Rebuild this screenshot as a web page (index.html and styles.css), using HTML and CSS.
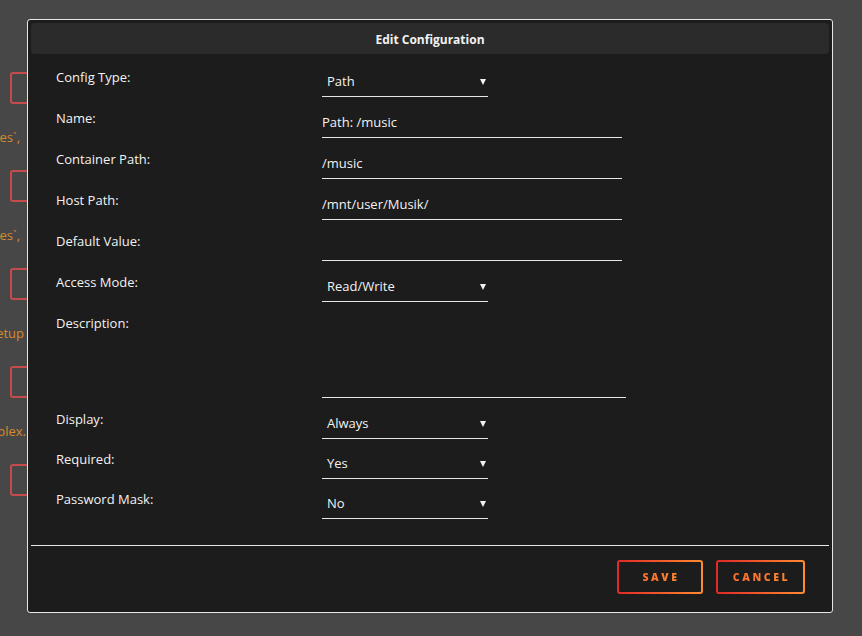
FILE: index.html
```html
<!DOCTYPE html>
<html lang="en">
<head>
  <meta charset="UTF-8">
  <title>Edit Configuration</title>
  <link rel="stylesheet" href="styles.css">
</head>
<body>
  <div id="page">
    <div class="bg-item"><div class="bg-box"></div><div class="bg-text"><span>files`,</span></div></div>
    <div class="bg-item"><div class="bg-box"></div><div class="bg-text"><span>values`,</span></div></div>
    <div class="bg-item"><div class="bg-box"></div><div class="bg-text wide"><span>setup</span></div></div>
    <div class="bg-item"><div class="bg-box"></div><div class="bg-text wider"><span>plex.</span></div></div>
    <div class="bg-item"><div class="bg-box"></div></div>
  </div>

  <div id="dialog">
    <div class="dialog-title">Edit Configuration</div>
    <form class="config-form">
      <div class="row">
        <label>Config Type:</label>
        <div class="select"><span>Path</span><i class="arrow"></i></div>
      </div>
      <div class="row">
        <label>Name:</label>
        <div class="input">Path: /music</div>
      </div>
      <div class="row">
        <label>Container Path:</label>
        <div class="input">/music</div>
      </div>
      <div class="row">
        <label>Host Path:</label>
        <div class="input">/mnt/user/Musik/</div>
      </div>
      <div class="row">
        <label>Default Value:</label>
        <div class="input"></div>
      </div>
      <div class="row">
        <label>Access Mode:</label>
        <div class="select"><span>Read/Write</span><i class="arrow"></i></div>
      </div>
      <div class="row">
        <label>Description:</label>
        <div class="textarea"></div>
      </div>
      <div class="row tight">
        <label>Display:</label>
        <div class="select"><span>Always</span><i class="arrow"></i></div>
      </div>
      <div class="row tight">
        <label>Required:</label>
        <div class="select"><span>Yes</span><i class="arrow"></i></div>
      </div>
      <div class="row tight">
        <label>Password Mask:</label>
        <div class="select"><span>No</span><i class="arrow"></i></div>
      </div>
    </form>
    <div class="divider"></div>
    <div class="actions">
      <button class="btn save"><span>SAVE</span></button>
      <button class="btn cancel"><span>CANCEL</span></button>
    </div>
  </div>
</body>
</html>
```

FILE: styles.css
```css
body {
  margin: 0;
  width: 862px;
  height: 636px;
  background: #474747;
  font-family: "Open Sans", "Noto Sans", sans-serif;
  font-size: 13px;
  color: #f2f2f2;
  overflow: hidden;
  position: relative;
}
#page {
  padding-top: 72px;
  padding-left: 10px;
}
.bg-item {
  height: 98px;
}
.bg-box {
  width: 60px;
  height: 28px;
  border: 2px solid #c84b4b;
  border-radius: 3px;
}
.bg-text {
  width: 20px;
  margin-left: -10px;
  margin-top: 24px;
  display: flex;
  justify-content: flex-end;
  white-space: nowrap;
  color: #d88a2a;
  font-size: 13px;
  line-height: 18px;
}
.bg-text.wide {
  width: 24px;
}
.bg-text.wider {
  width: 26px;
}

#dialog {
  position: absolute;
  left: 27px;
  top: 19px;
  width: 804px;
  height: 592px;
  border: 1px solid #e6e6e6;
  border-radius: 3px;
  background: #1c1c1c;
  display: flex;
  flex-direction: column;
}
.dialog-title {
  margin: 3px 3px 0;
  height: 31px;
  line-height: 33px;
  background: #2b2b2b;
  border-radius: 4px;
  text-align: center;
  font-weight: 700;
  font-size: 12px;
}
.config-form {
  padding: 12px 0 0 28px;
  flex: 1;
}
.row {
  display: grid;
  grid-template-columns: 266px auto;
  margin-bottom: 10px;
}
.row.tight {
  margin-bottom: 9px;
}
.row label {
  line-height: 20px;
  padding-top: 1px;
}
.select, .input {
  box-sizing: border-box;
  height: 31px;
  line-height: 30px;
  border-bottom: 1px solid #e6e6e6;
}
.select {
  width: 166px;
  padding: 0 2px 0 5px;
  display: flex;
  align-items: center;
  justify-content: space-between;
}
.arrow {
  width: 0;
  height: 0;
  border-left: 3px solid transparent;
  border-right: 3px solid transparent;
  border-top: 6px solid #f2f2f2;
  margin-top: 1px;
}
.input {
  width: 300px;
}
.textarea {
  box-sizing: border-box;
  width: 304px;
  height: 86px;
  border-bottom: 1px solid #e6e6e6;
}
.divider {
  margin: 0 3px;
  height: 1px;
  background: #e6e6e6;
}
.actions {
  display: flex;
  justify-content: flex-end;
  gap: 13px;
  padding: 14px 27px 18px 0;
}
.btn {
  height: 34px;
  border: 2px solid transparent;
  border-radius: 3px;
  background: linear-gradient(#1c1c1c, #1c1c1c) padding-box,
    linear-gradient(90deg, #e22828, #ff8c2f) border-box;
  font-family: "Open Sans", sans-serif;
  font-weight: 800;
  font-size: 10.5px;
  letter-spacing: 2.6px;
  padding: 0 0 0 2px;
  cursor: pointer;
}
.btn span {
  background: linear-gradient(90deg, #fb6e2c, #ff8530);
  -webkit-background-clip: text;
  background-clip: text;
  color: transparent;
}
.save {
  width: 86px;
}
.cancel {
  width: 89px;
}
```
